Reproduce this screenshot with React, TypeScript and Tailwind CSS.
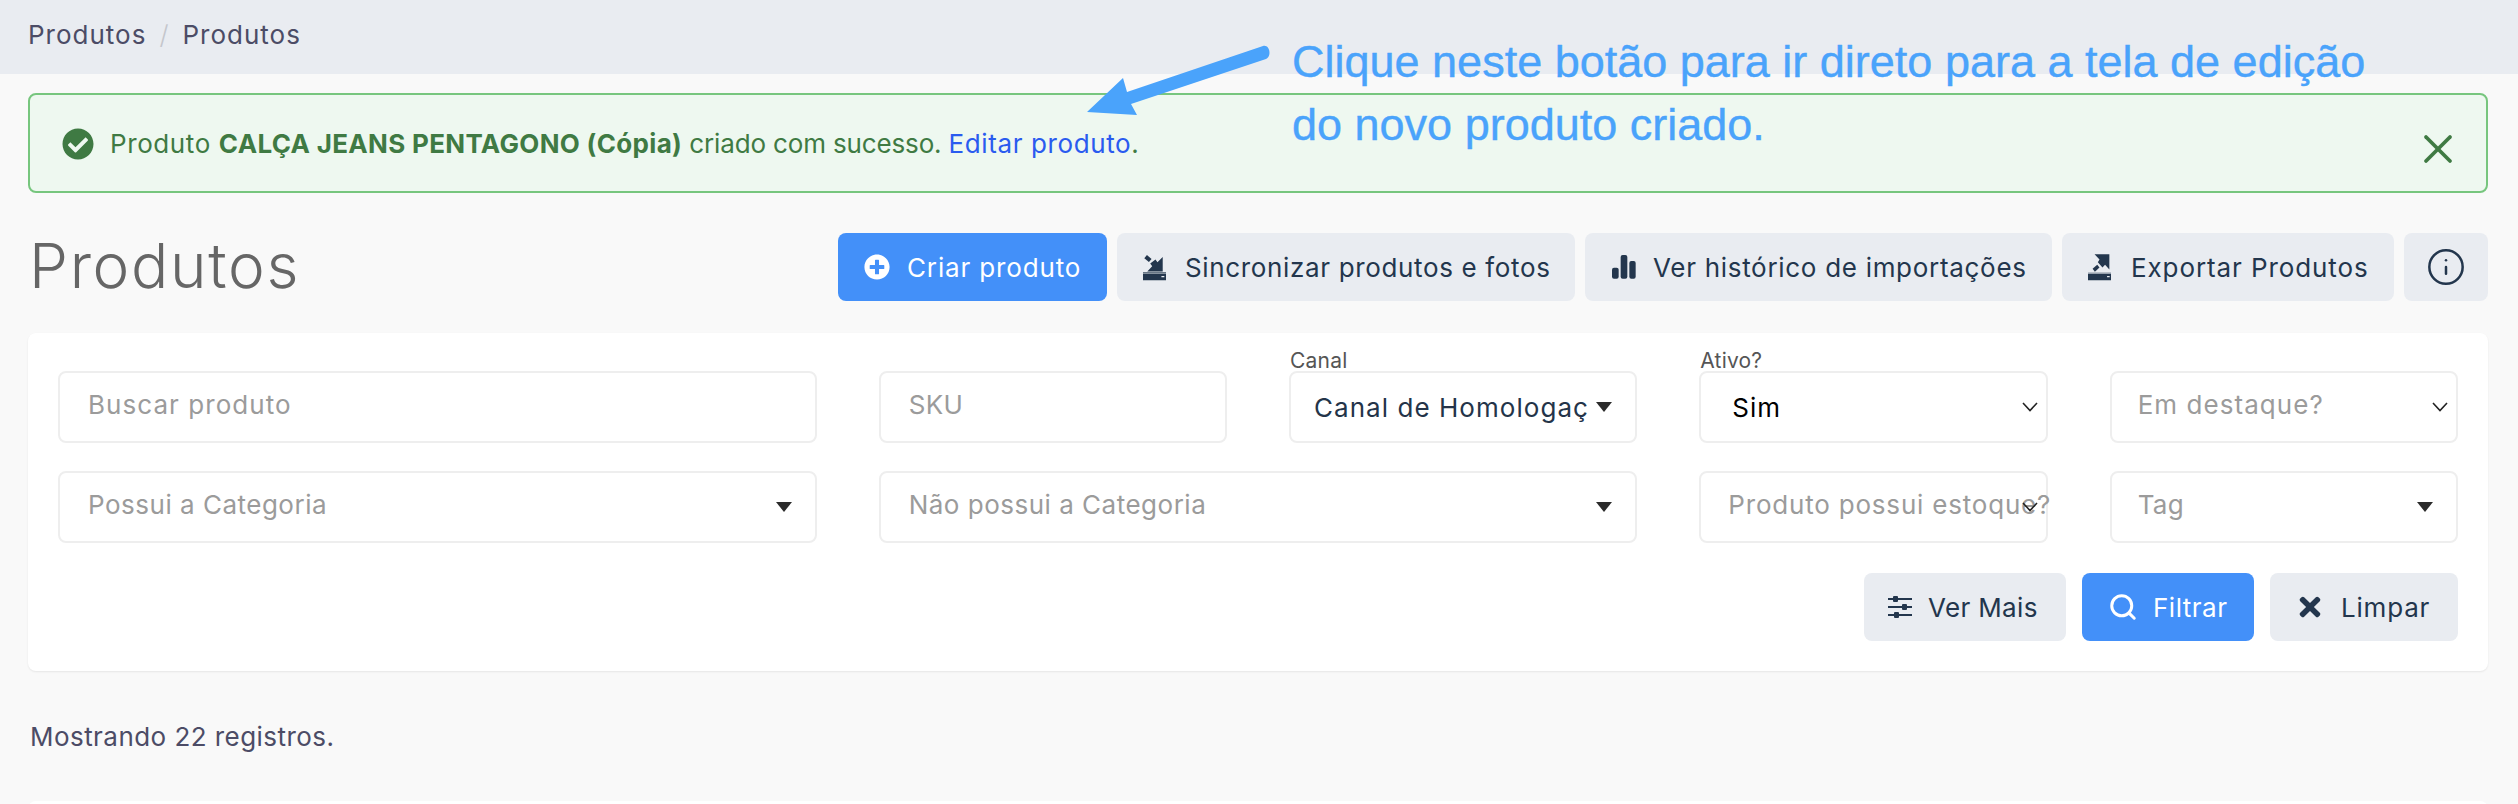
import React from "react";
import { FaCheckCircle, FaPlusCircle, FaTimes } from "react-icons/fa";
import { Info, Search, X } from "lucide-react";

const fontStack = "font-['Inter','Noto_Sans',sans-serif]";
const placeholder = "pl-[28px] text-[#9b9b9b] -mt-[6px]";
const lastColumn = "pl-[26px] text-[#9b9b9b] -mt-[6px]";

function SyncIcon() {
  return (
    <svg viewBox="40 20 70 80" className="w-[23px] h-[27px] shrink-0" fill="currentColor">
      <path d="M100 28V72H53L68 56L62 48L78 36L84 44Z" />
      <path d="M44 32L52 22L66 34L58 43Z" />
      <rect x="40" y="74" width="70" height="2" />
      <path fillRule="evenodd" d="M40 78H110V99H40ZM96 86V90H105V86Z" />
    </svg>
  );
}

function ExportIcon() {
  return (
    <svg viewBox="40 20 70 80" className="w-[23px] h-[27px] shrink-0" fill="currentColor">
      <path d="M60 20H105V66L92 52L84 60L70 44L75 36Z" />
      <path d="M54 64L68 52L75 60L61 73Z" />
      <rect x="40" y="76" width="70" height="2" />
      <path fillRule="evenodd" d="M40 80H112V99H40ZM98 86V90H106V86Z" />
    </svg>
  );
}

function BarsIcon() {
  return (
    <svg viewBox="40 28 72 72" className="w-[24px] h-[24px] shrink-0" fill="currentColor">
      <rect x="40" y="66" width="20" height="33" rx="6" />
      <rect x="66" y="28" width="20" height="71" rx="6" />
      <rect x="92" y="46" width="19" height="53" rx="6" />
    </svg>
  );
}

function SlidersIcon() {
  return (
    <svg viewBox="0 0 24 24" className="w-[24px] h-[24px] shrink-0" fill="currentColor">
      <rect x="0" y="3" width="24" height="2" />
      <rect x="0" y="11" width="24" height="2" />
      <rect x="0" y="19" width="24" height="2" />
      <rect x="5" y="1" width="5" height="6" rx="1" />
      <rect x="14" y="9" width="5" height="6" rx="1" />
      <rect x="6" y="17" width="5" height="6" rx="1" />
    </svg>
  );
}

function Caret() {
  return <span className="absolute right-[23px] top-1/2 -translate-y-1/2 w-0 h-0 border-x-[8px] border-x-transparent border-t-[10px] border-t-[#2b2b2b]" />;
}

function Chevron() {
  return (
    <svg viewBox="0 0 16 10" className="absolute right-[8px] top-1/2 -translate-y-1/2 w-[16px] h-[10px]" fill="none" stroke="#222" strokeWidth="1.6">
      <path d="M1 1L8 8.5L15 1" />
    </svg>
  );
}

function Field({ text, className = "", textClass = "tracking-[0.4px]", tone = placeholder, label, arrow }: {
  text: string;
  className?: string;
  textClass?: string;
  tone?: string;
  label?: string;
  arrow?: "caret" | "chevron";
}) {
  return (
    <div className={`relative h-[72px] bg-white border-2 border-[#eeeeee] rounded-[8px] flex items-center ${className}`}>
      {label && <span className="absolute -left-[1px] -top-[24px] text-[21px] leading-[24px] text-[#555] tracking-[0.2px]">{label}</span>}
      <span className={`whitespace-nowrap text-[26px] ${textClass} ${tone}`}>{text}</span>
      {arrow === "caret" && <Caret />}
      {arrow === "chevron" && <Chevron />}
    </div>
  );
}

function Btn({ children, primary, className = "" }: { children: React.ReactNode; primary?: boolean; className?: string }) {
  return (
    <button className={`h-[68px] rounded-[8px] flex items-center text-[26px] ${primary ? "bg-[#4390f9] text-white" : "bg-[#e9ecf1] text-[#23364d]"} ${className}`}>
      {children}
    </button>
  );
}

export default function App() {
  return (
    <div className={`relative h-[804px] w-full overflow-hidden bg-[#f9f9f9] text-[26px] ${fontStack}`}>
      {/* breadcrumb */}
      <div className="h-[74px] bg-[#e9ecf1] pl-[28px] pb-[6px] flex items-center text-[#4c4c66] tracking-[1px]">
        <span>Produtos</span>
        <span className="mx-[13px] text-[#c4c6cc] font-light">/</span>
        <span>Produtos</span>
      </div>

      <div className="pl-[28px] pr-[30px]">
        {/* alert */}
        <div className="mt-[19px] h-[100px] bg-[#eef8f0] border-2 border-[#77c67e] rounded-[8px] flex items-center pl-[32px] pr-[32px] text-[#3f7a43]">
          <FaCheckCircle className="w-[32px] h-[32px] shrink-0 mr-[16px] mt-[2px]" />
          <span>
            <span className="tracking-[0.6px]">Produto </span>
            <strong className="font-bold tracking-[0.32px]">CALÇA JEANS PENTAGONO (Cópia)</strong>
            <span className="tracking-[-0.15px]"> criado com sucesso. </span>
            <span className="text-[#2a5bef] tracking-[0.6px]">Editar produto</span>.
          </span>
          <X className="w-[48px] h-[48px] ml-auto mt-[12px] -mr-[8px]" strokeWidth={1.9} />
        </div>

        {/* title and actions */}
        <div className="mt-[40px] flex items-center justify-between">
          <h1 className="text-[62px] leading-[68px] font-light text-[#666666] pl-[1px] -mt-[3px] tracking-[1.7px]">Produtos</h1>
          <div className="flex gap-[10px]">
            <Btn primary className="w-[269px] pl-[26px] tracking-[0.85px]">
              <FaPlusCircle className="w-[26px] h-[26px] mr-[17px]" />
              Criar produto
            </Btn>
            <Btn className="w-[458px] pl-[26px] tracking-[0.65px]">
              <SyncIcon />
              <span className="ml-[19px]">Sincronizar produtos e fotos</span>
            </Btn>
            <Btn className="w-[467px] pl-[27px] tracking-[0.7px]">
              <BarsIcon />
              <span className="ml-[17px]">Ver histórico de importações</span>
            </Btn>
            <Btn className="w-[332px] pl-[26px] tracking-[0.9px]">
              <ExportIcon />
              <span className="ml-[20px]">Exportar Produtos</span>
            </Btn>
            <Btn className="w-[84px] justify-center">
              <Info className="w-[40px] h-[40px]" strokeWidth={1.5} />
            </Btn>
          </div>
        </div>

        {/* filters */}
        <div className="mt-[32px] h-[338px] bg-white rounded-[8px] shadow-[0_1px_2px_rgba(0,0,0,0.08)] pt-[38px] px-[30px]">
          <div className="grid grid-cols-6 gap-x-[62px] gap-y-[28px]">
            <Field text="Buscar produto" className="col-span-2" textClass="tracking-[1.05px]" />
            <Field text="SKU" />
            <Field text="Canal de Homologaç" label="Canal" arrow="caret" textClass="tracking-[1.05px]" tone="pl-[23px] text-[#243449]" />
            <Field text="Sim" label="Ativo?" arrow="chevron" textClass="tracking-[1px]" tone="pl-[31px] text-black" />
            <Field text="Em destaque?" arrow="chevron" textClass="tracking-[1.05px]" tone={lastColumn} />
            <Field text="Possui a Categoria" className="col-span-2" arrow="caret" textClass="tracking-[0.5px]" />
            <Field text="Não possui a Categoria" className="col-span-2" arrow="caret" textClass="tracking-[0.5px]" />
            <Field text="Produto possui estoque?" arrow="chevron" textClass="tracking-[0.8px]" tone="pl-[27px] text-[#9b9b9b] -mt-[6px]" />
            <Field text="Tag" arrow="caret" textClass="tracking-[0.3px]" tone={lastColumn} />
          </div>
          <div className="mt-[30px] flex justify-end gap-[16px]">
            <Btn className="w-[202px] pl-[24px] tracking-[0.35px]">
              <SlidersIcon />
              <span className="ml-[16px]">Ver Mais</span>
            </Btn>
            <Btn primary className="w-[172px] pl-[26px] tracking-[0.5px]">
              <Search className="w-[30px] h-[30px] mr-[15px]" strokeWidth={2.4} />
              Filtrar
            </Btn>
            <Btn className="w-[188px] pl-[26px] tracking-[0.8px]">
              <FaTimes className="w-[28px] h-[30px] mr-[17px]" />
              Limpar
            </Btn>
          </div>
        </div>

        <p className="mt-[50px] pl-[2px] leading-[32px] text-[#4c4c66] tracking-[0.45px]">Mostrando 22 registros.</p>
        <div className="mt-[48px] h-[40px] bg-white rounded-t-[8px]" />
      </div>

      {/* annotation over the page */}
      <svg viewBox="0 0 2518 804" className="absolute inset-0 w-[2518px] h-[804px] pointer-events-none" fill="#4aa3fb">
        <path d="M1087 112L1123 78L1127 92L1263 46C1270 44 1272 57 1266 59L1131 104L1137 115Z" />
      </svg>
      <div className="absolute left-[1292px] top-[30px] font-['Liberation_Sans',Arial,sans-serif] text-[45px] leading-[63px] text-[#4aa3fb] whitespace-nowrap [-webkit-text-stroke:0.4px_#4aa3fb]">
        <div>Clique neste botão para ir direto para a tela de edição</div>
        <div>do novo produto criado.</div>
      </div>
    </div>
  );
}
